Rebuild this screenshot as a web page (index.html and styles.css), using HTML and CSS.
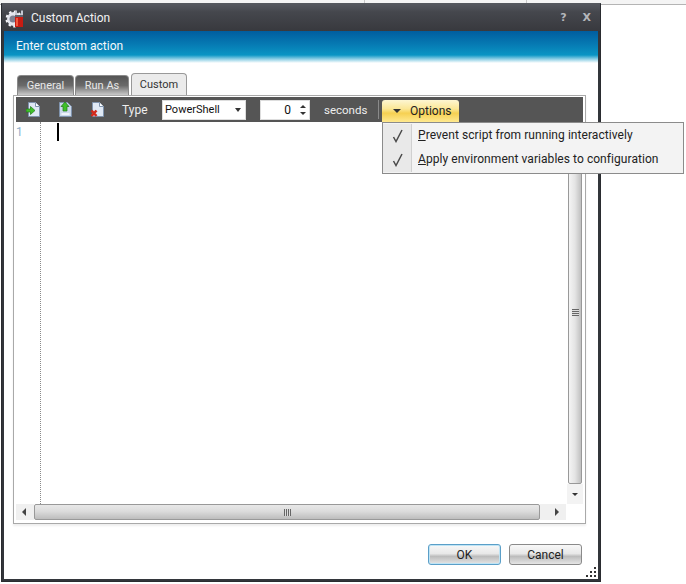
FILE: index.html
```html
<!DOCTYPE html>
<html lang="en">
<head>
<meta charset="utf-8">
<title>Custom Action</title>
<link rel="stylesheet" href="styles.css">
</head>
<body>
<div class="backdrop"><span class="bd-cell bd-a"></span><span class="bd-cell bd-b"></span></div>
<div class="window">
  <div class="titlebar">
    <svg class="app-icon" width="20" height="20" viewBox="0 0 20 20">
      <circle cx="9" cy="11" r="7" fill="#e4e6ee"/>
      <circle cx="9" cy="11" r="7.500" fill="none" stroke="#f4f4f8" stroke-width="2" stroke-dasharray="2.500 2.500"/>
      <circle cx="8" cy="11" r="3.500" fill="#7d8192"/>
      <rect x="10" y="9" width="8" height="10" fill="#c81c12"/>
      <rect x="11" y="10" width="2" height="8" fill="#ee5a40"/>
      <path d="M11 2.500v5M17 2.500v5" stroke="#c4c8d2" stroke-width="2"/>
      <path d="M10 8h8" stroke="#60646e" stroke-width="2"/>
    </svg>
    <span class="title-text">Custom Action</span>
    <span class="title-btn help">?</span>
    <span class="title-btn close">X</span>
  </div>
  <div class="client">
    <div class="banner">Enter custom action</div>
    <div class="tabs">
      <span class="tab">General</span>
      <span class="tab">Run As</span>
      <span class="tab active">Custom</span>
    </div>
    <div class="panel">
      <div class="toolbar">
        <span class="tool">
          <svg width="14" height="15" viewBox="0 0 14 15"><path d="M2.500.500h7l4 4v10h-11z" fill="#dfe8f4" stroke="#7f93ad"/><path d="M9.500.500v4h4" fill="#fff" stroke="#7f93ad"/><path d="M0 7h4.500V4.500L9 8.500l-4.500 4V10H0z" fill="#3fc02a" stroke="#1f7a18" stroke-width=".7"/></svg>
        </span>
        <span class="tool">
          <svg width="14" height="15" viewBox="0 0 14 15"><path d="M1.500.500h8l4 4v10h-12z" fill="#cbd8ea" stroke="#7f93ad"/><path d="M3.500 11h8v2h-8z" fill="#eef3fa"/><path d="M7 0l4 4.500H9V9H5V4.500H3z" fill="#3fc02a" stroke="#1f7a18" stroke-width=".7"/></svg>
        </span>
        <span class="tool">
          <svg width="14" height="15" viewBox="0 0 14 15"><path d="M2.500.500h7l4 4v10h-11z" fill="#dfe8f4" stroke="#7f93ad"/><path d="M9.500.500v4h4" fill="#fff" stroke="#7f93ad"/><path d="M1.500 8.500l5 5.500M6.500 8.500l-5 5.500" stroke="#d42a1c" stroke-width="2.600"/></svg>
        </span>
        <span class="tb-label type-label">Type</span>
        <span class="select"><span class="select-value">PowerShell</span><span class="caret-down small"></span></span>
        <span class="spinner"><span class="spin-value">0</span>
          <span class="spin-arrows"><span class="arrow-up"></span><span class="arrow-down"></span></span>
        </span>
        <span class="tb-label seconds">seconds</span>
        <span class="sep"></span>
        <span class="options"><span class="caret-down"></span>Options</span>
      </div>
      <div class="editor-wrap">
        <div class="editor">
          <div class="gutter">1</div>
          <div class="code"><span class="text-caret"></span></div>
          <div class="vscroll">
            <div class="v-thumb"><span class="v-grip"></span></div>
            <div class="v-btn"><span class="arrow-down dark"></span></div>
          </div>
        </div>
        <div class="hscroll">
          <div class="h-btn h-left"><span class="arrow-left"></span></div>
          <div class="h-thumb"><span class="h-grip"></span></div>
          <div class="h-btn h-right"><span class="arrow-right"></span></div>
        </div>
      </div>
    </div>
    <div class="footer">
      <button class="btn default" type="button">OK</button>
      <button class="btn" type="button">Cancel</button>
    </div>
    <div class="resize-grip"></div>
  </div>
  <div class="menu">
    <div class="menu-item"><span class="check"><svg width="11" height="14" viewBox="0 0 11 14"><path d="M1.500 8l2.500 4.500L10 1" fill="none" stroke="#4a4a4a" stroke-width="1.500"/></svg></span><span class="menu-text"><u>P</u>revent script from running interactively</span></div>
    <div class="menu-item"><span class="check"><svg width="11" height="14" viewBox="0 0 11 14"><path d="M1.500 8l2.500 4.500L10 1" fill="none" stroke="#4a4a4a" stroke-width="1.500"/></svg></span><span class="menu-text"><u>A</u>pply environment variables to configuration</span></div>
  </div>
</div>
</body>
</html>
```
FILE: styles.css
```css
* { box-sizing: border-box; }
html, body { margin: 0; padding: 0; background: #fff; }
body {
  width: 686px;
  height: 584px;
  overflow: hidden;
  position: relative;
  font-family: Roboto, "Open Sans", sans-serif;
  font-size: 12px;
  color: #1a1a1a;
}
.backdrop {
  height: 5px;
  border-bottom: 1px solid #b4b4b4;
  background: #f4f4f4;
  display: flex;
}
.bd-cell { display: block; height: 4px; border-right: 1px solid #c8c8c8; }
.bd-a { width: 365px; }
.bd-b { width: 162px; }
.window {
  position: absolute;
  left: 1px;
  top: 3px;
  width: 600px;
  height: 579px;
  background: #33363b;
  padding: 0 2px 2px;
  display: flex;
  flex-direction: column;
  border: 1px solid #2a2c30;
  border-top-color: #55585e;
}
.titlebar {
  height: 27px;
  flex: none;
  background: linear-gradient(#55575e, #45474d 30%, #38393e);
  display: flex;
  align-items: center;
  color: #f2f2f2;
  margin: 0 -2px;
  padding: 0 9px 0 3px;
}
.app-icon { flex: none; }
.title-text { margin-left: 6px; flex: 1; }
.title-btn { font-family: "DejaVu Sans", sans-serif; font-weight: 700; color: #b4b6ba; font-size: 11px; }
.help { margin-right: 16px; }
.client {
  flex: 1;
  background: #fff;
  position: relative;
  display: flex;
  flex-direction: column;
  min-height: 0;
}
.banner {
  height: 32px;
  flex: none;
  color: #f4f8fb;
  padding: 8px 0 0 12px;
  background: linear-gradient(#005d9f 0, #0679b2 40%, #0a95c4 75%, #8fd0e6 88%, #fff 100%);
}
.tabs {
  display: flex;
  align-items: flex-end;
  height: 32px;
  flex: none;
  padding-left: 13px;
  gap: 1px;
}
.tab {
  height: 20px;
  padding: 3px 0 0;
  width: 57px;
  text-align: center;
  border: 1px solid #8a8a8a;
  border-bottom: 0;
  border-radius: 4px 4px 0 0;
  background: linear-gradient(#555 0, #6a6a6a 50%, #c9c9c9 100%);
  color: #e8e8e8;
  font-size: 11px;
}
.tab:nth-child(2) { width: 54px; margin-right: 1px; }
.tab.active {
  height: 22px;
  width: 56px;
  background: #ebebeb;
  color: #333;
  border-color: #999;
  padding-top: 4px;
}
.panel {
  margin: 0 12px 0 9px;
  height: 429px;
  flex: none;
  border: 1px solid #a9a9a9;
  padding: 1px 2px 2px;
  background: #fff;
  box-shadow: 0 2px 2px #eee;
  display: flex;
  flex-direction: column;
}
.toolbar {
  height: 25px;
  flex: none;
  background: #555;
  display: flex;
  align-items: center;
  color: #eee;
}
.tool { width: 32px; display: flex; justify-content: center; flex: none; }
.tool:first-child { margin-left: 1px; }
.tb-label { color: #eee; }
.type-label { margin-left: 9px; width: 40px; }
.select {
  width: 84px;
  height: 20px;
  background: #fff;
  color: #111;
  display: flex;
  align-items: center;
  justify-content: space-between;
  padding: 0 4px 0 2px;
  border: 1px solid #ddd;
  font-size: 11px;
}
.spinner {
  margin-left: 14px;
  width: 50px;
  height: 20px;
  background: #fff;
  color: #111;
  border: 1px solid #ddd;
  display: flex;
  align-items: center;
  justify-content: flex-end;
}
.spin-value { margin-right: 5px; }
.spin-arrows { display: flex; flex-direction: column; gap: 4px; width: 13px; align-items: center; }
.seconds { margin-left: 14px; width: 54px; font-size: 11.500px; }
.sep { width: 1px; height: 19px; background: #8a8a8a; }
.options {
  margin-left: 3px;
  width: 77px;
  height: 22px;
  margin-top: 2px;
  border-radius: 3px 3px 0 0;
  background: linear-gradient(#fdf6d2 0, #fbe796 40%, #f6d052 60%, #ffe98f 100%);
  color: #222;
  display: flex;
  align-items: center;
  padding-left: 11px;
  gap: 9px;
}
.caret-down, .arrow-down { display: block; width: 0; height: 0; border-left: 4px solid transparent; border-right: 4px solid transparent; border-top: 4px solid #333; }
.caret-down.small, .arrow-down, .arrow-up { border-left-width: 3px; border-right-width: 3px; }
.arrow-down { border-top-width: 3px; }
.arrow-down.dark { border-top-color: #333; }
.arrow-up { display: block; width: 0; height: 0; border-left: 3px solid transparent; border-right: 3px solid transparent; border-bottom: 3px solid #333; }
.arrow-left { display: block; width: 0; height: 0; border-top: 4px solid transparent; border-bottom: 4px solid transparent; border-right: 4px solid #444; }
.arrow-right { display: block; width: 0; height: 0; border-top: 4px solid transparent; border-bottom: 4px solid transparent; border-left: 4px solid #444; }
.editor-wrap { flex: 1; display: flex; flex-direction: column; min-height: 0; }
.editor { flex: 1; display: flex; min-height: 0; }
.gutter {
  width: 25px;
  flex: none;
  border-right: 1px dotted #8a8a8a;
  color: #8fb0cc;
  padding: 2px 0 0 0;
  line-height: 17px;
}
.code { flex: 1; padding-left: 16px; }
.text-caret { display: block; width: 2px; height: 18px; background: #000; margin-top: 1px; }
.vscroll { width: 16px; flex: none; display: flex; flex-direction: column; }
.v-thumb {
  flex: 1;
  border: 1px solid #999;
  border-radius: 2px;
  background: linear-gradient(90deg, #f4f4f4, #e4e4e4 50%, #c0c0c0);
  display: flex;
  align-items: center;
  justify-content: center;
  padding-top: 19px;
  margin: 0 1px;
}
.v-grip { width: 7px; height: 7px; background: repeating-linear-gradient(#666 0 1px, #ddd 1px 2px); display: block; }
.v-btn { height: 20px; display: flex; align-items: center; justify-content: center; background: #f3f3f3; flex: none; }
.hscroll { height: 16px; flex: none; display: flex; margin-right: 17px; margin-bottom: 1px; }
.h-btn { flex: none; display: flex; align-items: center; background: #f0f0f0; }
.h-left { width: 18px; padding-left: 6px; }
.h-right { width: 26px; padding-left: 15px; }
.h-thumb {
  flex: 1;
  border: 1px solid #999;
  border-radius: 2px;
  background: linear-gradient(#e8e8e8, #dcdcdc 45%, #bdbdbd);
  display: flex;
  align-items: center;
  justify-content: center;
}
.h-grip { width: 7px; height: 7px; background: repeating-linear-gradient(90deg, #666 0 1px, #ddd 1px 2px); display: block; }
.footer { display: flex; justify-content: flex-end; gap: 8px; padding: 20px 16px 0 0; }
.btn {
  width: 73px;
  height: 21px;
  padding: 0;
  font: 12px Roboto, "Open Sans", sans-serif;
  color: #222;
  border: 1px solid #8a8a8a;
  border-radius: 3px;
  background: linear-gradient(#f8f8f8 0, #e8e8e8 45%, #bcbcbc 60%, #e6e6e6 100%);
}
.btn.default {
  border-color: #5b9fc8;
  box-shadow: inset 0 0 0 1px #bfe4f5;
}
.resize-grip {
  position: absolute;
  right: 1px;
  bottom: 1px;
  width: 11px;
  height: 11px;
  background:
    linear-gradient(#333, #333) 8px 0 / 2px 2px no-repeat,
    linear-gradient(#333, #333) 4px 4px / 2px 2px no-repeat,
    linear-gradient(#333, #333) 8px 4px / 2px 2px no-repeat,
    linear-gradient(#333, #333) 0 8px / 2px 2px no-repeat,
    linear-gradient(#333, #333) 4px 8px / 2px 2px no-repeat,
    linear-gradient(#333, #333) 8px 8px / 2px 2px no-repeat;
}
.menu {
  position: absolute;
  left: 380px;
  top: 118px;
  width: 302px;
  height: 52px;
  background: #f3f3f3;
  border: 1px solid #8b8b8b;
  padding: 1px 0;
  color: #222;
  z-index: 5;
}
.menu-item { height: 24px; display: flex; align-items: center; }
.check {
  width: 29px;
  flex: none;
  height: 24px;
  display: flex;
  align-items: center;
  justify-content: center;
  background: #e9e9e9;
  border-right: 1px solid #d0d0d0;
}
.menu-text { margin-left: 6px; position: relative; top: -1px; letter-spacing: .06px; }
```
